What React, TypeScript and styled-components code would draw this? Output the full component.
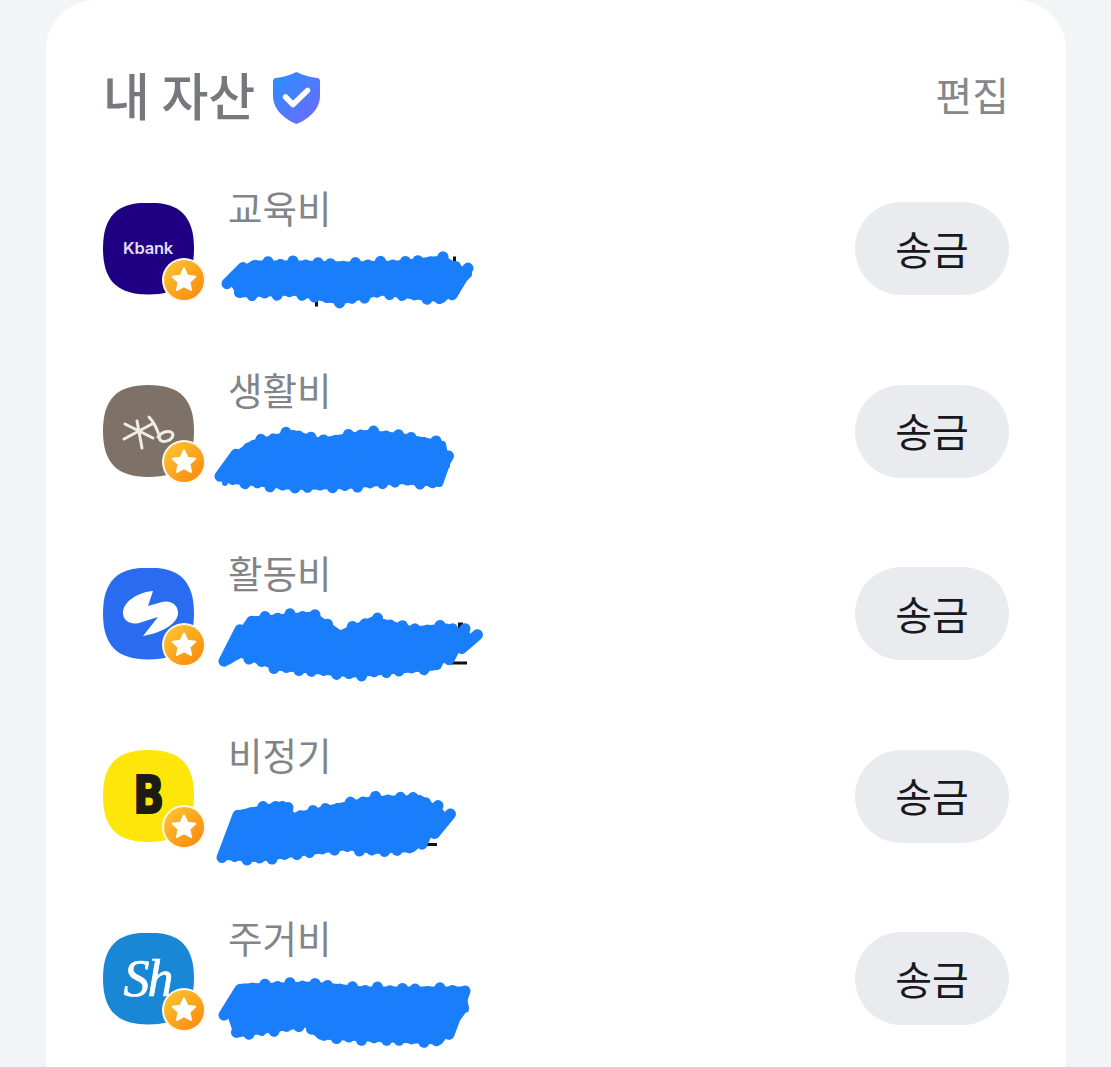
import React from "react";
import styled, { createGlobalStyle } from "styled-components";

const Global = createGlobalStyle`
  html, body { margin: 0; padding: 0; background: #f3f4f6; }
  body { font-family: "Noto Sans CJK KR", "Noto Sans", sans-serif; }
`;

const Page = styled.div`
  width: 1111px;
  height: 1067px;
  overflow: hidden;
  padding: 0 45px 0 46px;
  box-sizing: border-box;
  background: #f3f4f6;
`;

const Card = styled.section`
  background: #fff;
  border-radius: 50px 50px 0 0;
  padding: 0 57px;
  height: 1100px;
`;

const Header = styled.header`
  height: 157.25px;
  padding-top: 31px;
  box-sizing: border-box;
  display: flex;
  align-items: center;
  justify-content: space-between;
`;

const TitleGroup = styled.div`
  display: flex;
  align-items: center;
  gap: 20px;
`;

const Title = styled.h2`
  margin: 0;
  font-size: 51px;
  line-height: 60px;
  font-weight: 500;
  color: #75787c;
  letter-spacing: 0;
`;

const ShieldSvg = styled.svg`
  width: 47px;
  height: 52px;
  margin: 8px 2px 0 -2px;
  display: block;
`;

const EditLink = styled.span`
  font-size: 40px;
  line-height: 50px;
  color: #85878b;
`;

const Row = styled.div`
  height: 182.5px;
  display: flex;
  align-items: center;
`;

const IconWrap = styled.div`
  position: relative;
  width: 91px;
  height: 92px;
  flex: none;
`;

const IconFace = styled.div<{ $bg: string }>`
  width: 91px;
  height: 92px;
  background: ${(p) => p.$bg};
  clip-path: path("M45.5 0C77 0 91 14 91 46C91 78 77 92 45.5 92C14 92 0 78 0 46C0 14 14 0 45.5 0Z");
  display: flex;
  align-items: center;
  justify-content: center;
`;

const LogoSvg = styled.svg`
  width: 91px;
  height: 92px;
  display: block;
`;

const KbankMark = styled.span`
  font-family: Inter, "Noto Sans", sans-serif;
  font-size: 16.5px;
  line-height: 1;
  font-weight: 600;
  color: #e4dcfa;
  letter-spacing: -0.2px;
  margin-left: -1px;
`;

const BMark = styled.span`
  font-family: "DejaVu Sans", sans-serif;
  font-size: 52px;
  line-height: 1;
  font-weight: 700;
  color: #1c1b16;
  -webkit-text-stroke: 2px #1c1b16;
  transform: scaleX(0.78);
  margin: -3px 0 0 0;
`;

const ShMark = styled.span`
  font-family: "Liberation Serif", serif;
  font-style: italic;
  font-weight: 400;
  font-size: 52px;
  line-height: 1;
  color: #fff;
  -webkit-text-stroke: 0.7px #fff;
  letter-spacing: -2px;
  margin: 1px 0 0 -2px;
`;

const Badge = styled.svg`
  position: absolute;
  left: 59px;
  top: 55px;
  width: 44px;
  height: 44px;
`;

const TextColumn = styled.div`
  margin-left: 34px;
  width: 250px;
  height: 124px;
`;

const Name = styled.div`
  font-size: 37.5px;
  line-height: 44px;
  margin: -2px 0 2px;
  color: #818488;
  white-space: nowrap;
`;

const ScribbleSvg = styled.svg`
  display: block;
  width: 250px;
  height: 80px;
  overflow: visible;
`;

const SendButton = styled.button`
  margin-left: auto;
  flex: none;
  width: 154px;
  height: 93px;
  border: none;
  border-radius: 47px;
  background: #e9ebef;
  color: #17191e;
  font-family: inherit;
  font-size: 40px;
  line-height: 1;
  padding: 0 0 2px;
`;

type Pt = [number, number];

const lerp = (pts: Pt[], x: number) => {
  if (x <= pts[0][0]) return pts[0][1];
  for (let i = 1; i < pts.length; i++) {
    if (x <= pts[i][0]) {
      const t = (x - pts[i - 1][0]) / (pts[i][0] - pts[i - 1][0]);
      return pts[i - 1][1] + t * (pts[i][1] - pts[i - 1][1]);
    }
  }
  return pts[pts.length - 1][1];
};

const INK = "#1a7efb";

const Scribble = ({ top, bottom, specks, ox, oy }: { top: Pt[]; bottom: Pt[]; specks: number[][]; ox: number; oy: number }) => {
  const start = Math.max(top[0][0], bottom[0][0]);
  const end = Math.min(top[top.length - 1][0], bottom[bottom.length - 1][0]);
  const lines: string[] = [];
  let i = 0;
  for (let x = start + 10; x < end - 4; x += 12.5) {
    const wob = [0, 2.4, -1.2, 1.4, -2, 1.8, -0.6][i % 7];
    const t = lerp(top, x + 8) + 5.5 + wob;
    const b = lerp(bottom, x - 8) - 5.5 - wob * 0.8;
    lines.push(`M${(x - 8).toFixed(1)} ${b.toFixed(1)}L${(x + 8).toFixed(1)} ${t.toFixed(1)}`);
    i++;
  }
  const clampX = (x: number) => Math.min(end - 7, Math.max(start + 7, x));
  const outline = [
    ...top.map((p): Pt => [clampX(p[0]), p[1] + 6]),
    ...[...bottom].reverse().map((p): Pt => [clampX(p[0]), p[1] - 6]),
  ]
    .map((p) => `${p[0]},${p[1]}`)
    .join(" ");
  return (
    <ScribbleSvg viewBox={`${ox} ${oy} 250 80`} aria-hidden="true">
      {specks.map((s, k) => (
        <rect key={k} x={s[0]} y={s[1]} width={s[2]} height={s[3]} fill="#111" />
      ))}
      <polygon points={outline} fill={INK} stroke={INK} strokeWidth={6} strokeLinejoin="round" />
      <path d={lines.join("")} stroke={INK} strokeWidth={11} strokeLinecap="round" fill="none" />
    </ScribbleSvg>
  );
};

const StarBadge = ({ id }: { id: string }) => (
  <Badge viewBox="0 0 44 44" aria-hidden="true">
    <defs>
      <linearGradient id={id} x1="0.15" y1="0.1" x2="0.9" y2="0.9">
        <stop offset="0" stopColor="#fbc02f" />
        <stop offset="1" stopColor="#fb8c10" />
      </linearGradient>
    </defs>
    <circle cx="22" cy="22" r="22" fill="#fff8ea" />
    <circle cx="22" cy="22" r="20" fill={`url(#${id})`} />
    <path
      d="M22 10.5L25.4 17.7L33.2 18.7L27.5 24.1L29 31.9L22 28.1L15 31.9L16.5 24.1L10.8 18.7L18.6 17.7Z"
      fill="#fff"
      stroke="#fff"
      strokeWidth="2"
      strokeLinejoin="round"
    />
  </Badge>
);

const KbLogo = () => (
  <LogoSvg viewBox="0 0 91 92" aria-hidden="true">
    <g stroke="#f1ece6" fill="none" strokeLinecap="round" strokeLinejoin="round">
      <path d="M22 39L50 53M21 54L49 39M34 36L39 63" strokeWidth="3" />
      <path d="M46 32C51 37 56 47 57 55C60 58 69 56 70 50C70 45 60 45 55 52" strokeWidth="3" />
    </g>
  </LogoSvg>
);

const TossLogo = () => (
  <LogoSvg viewBox="0 0 91 92" aria-hidden="true">
    <path
      d="M50 23C36 24 20 33 20 45C20 53 28 57 36 55L55 49L40 68C58 65 75 56 75 45C75 36 67 32 59 34L45 38Z"
      fill="#fff"
    />
  </LogoSvg>
);

const rows = [
  {
    name: "교육비", bg: "#1f0083", logo: <KbankMark>Kbank</KbankMark>, oy: 230.5,
    top: [[225,270],[253,257],[297,257],[347,258],[397,257],[443,252],[457,260],[476,267]] as Pt[],
    bottom: [[225,287],[240,300],[293,298],[340,307],[380,298],[443,305],[476,280]] as Pt[],
    specks: [[453,256,3,8],[315,298,3,8]],
  },
  {
    name: "생활비", bg: "#7e7168", logo: <KbLogo />, oy: 413,
    top: [[218,477],[230,453],[253,437],[293,427],[320,435],[367,427],[400,430],[443,438],[454,460]] as Pt[],
    bottom: [[218,481],[233,487],[293,493],[347,492],[400,487],[440,490],[454,470]] as Pt[],
    specks: [],
  },
  {
    name: "활동비", bg: "#2a6cf0", logo: <TossLogo />, oy: 595.5,
    top: [[222,643],[250,613],[313,608],[340,627],[373,613],[413,623],[447,620],[474,627]] as Pt[],
    bottom: [[222,667],[240,660],[277,673],[353,680],[433,673],[474,647]] as Pt[],
    specks: [[458,622,5,6],[450,661,17,3]],
  },
  {
    name: "비정기", bg: "#ffe60a", logo: <BMark>B</BMark>, oy: 778,
    top: [[220,835],[240,807],[283,798],[293,810],[373,793],[420,792],[449,807]] as Pt[],
    bottom: [[220,863],[257,865],[347,853],[373,857],[413,855],[449,830]] as Pt[],
    specks: [[425,843,12,3]],
  },
  {
    name: "주거비", bg: "#1787d6", logo: <ShMark>Sh</ShMark>, oy: 960.5,
    top: [[222,1003],[243,980],[313,978],[363,983],[463,983],[473,1003]] as Pt[],
    bottom: [[222,1017],[237,1040],[307,1030],[320,1042],[440,1047],[473,1013]] as Pt[],
    specks: [],
  },
];

export default function App() {
  return (
    <Page>
      <Global />
      <Card>
        <Header>
          <TitleGroup>
            <Title>내 자산</Title>
            <ShieldSvg viewBox="0 0 47 52" aria-hidden="true">
              <defs>
                <linearGradient id="shield" x1="0.1" y1="0" x2="0.9" y2="1">
                  <stop offset="0" stopColor="#2a8eff" />
                  <stop offset="1" stopColor="#6f69ff" />
                </linearGradient>
              </defs>
              <path
                d="M23.5 0C30 3 38 5.5 44 6C46 6.2 47 7.5 47 9.5V24C47 37 36 47 23.5 52C11 47 0 37 0 24V9.5C0 7.5 1 6.2 3 6C9 5.5 17 3 23.5 0Z"
                fill="url(#shield)"
              />
              <path d="M12.5 25L20 32.5L34.5 18.5" fill="none" stroke="#fff" strokeWidth="5.5" strokeLinecap="round" strokeLinejoin="round" />
            </ShieldSvg>
          </TitleGroup>
          <EditLink>편집</EditLink>
        </Header>
        {rows.map((r, i) => (
          <Row key={r.name}>
            <IconWrap>
              <IconFace $bg={r.bg}>{r.logo}</IconFace>
              <StarBadge id={`star${i}`} />
            </IconWrap>
            <TextColumn>
              <Name>{r.name}</Name>
              <Scribble top={r.top} bottom={r.bottom} specks={r.specks} ox={228} oy={r.oy} />
            </TextColumn>
            <SendButton>송금</SendButton>
          </Row>
        ))}
      </Card>
    </Page>
  );
}
